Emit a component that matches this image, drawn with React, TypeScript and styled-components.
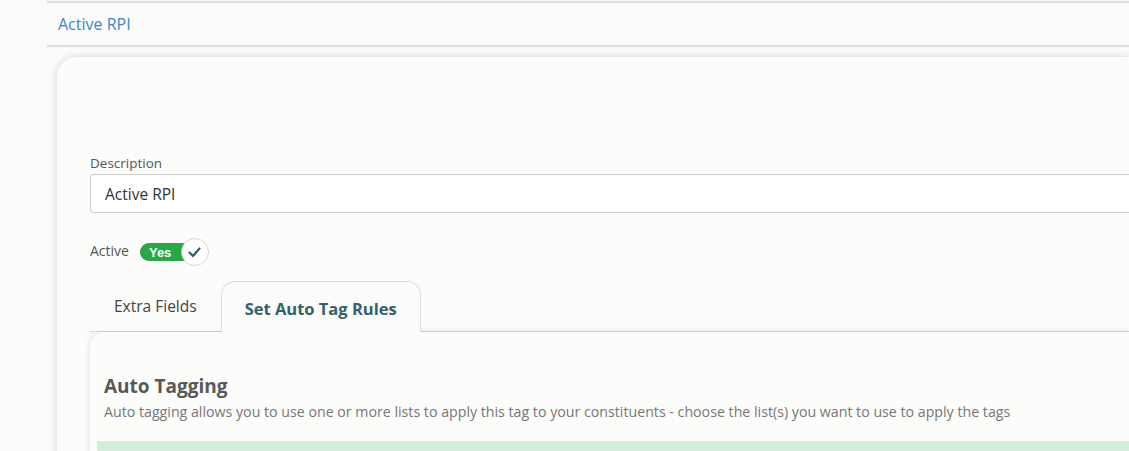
import React from 'react';
import styled, { createGlobalStyle } from 'styled-components';

const GlobalStyle = createGlobalStyle`
  html, body {
    margin: 0;
    padding: 0;
    background: #fbfbf9;
    font-family: 'Open Sans', 'Liberation Sans', sans-serif;
    overflow: hidden;
  }
`;

const Page = styled.div`
  padding-left: 47px;
  padding-top: 1px;
  width: 1129px;
  height: 451px;
  box-sizing: border-box;
  overflow: hidden;
`;

const HeaderBar = styled.div`
  border-top: 2px solid #dedede;
  border-bottom: 2px solid #dedede;
  height: 42px;
  display: flex;
  align-items: center;
  padding-left: 11px;
`;

const HeaderTitle = styled.span`
  color: #3a87c6;
  font-size: 16px;
`;

const Card = styled.div`
  margin: 10px 0 0 10px;
  background: #fcfcfa;
  border-radius: 20px 0 0 0;
  box-shadow: 0 0 8px rgba(0, 0, 0, 0.16);
  padding: 96px 0 0 33px;
  height: 400px;
`;

const Label = styled.label<{ $size?: number }>`
  display: block;
  font-size: ${(p) => p.$size ?? 13.5}px;
  color: #555;
  line-height: 21px;
`;

const TextInput = styled.div`
  height: 39px;
  box-sizing: border-box;
  border: 1px solid #ccc;
  border-right: none;
  border-radius: 4px 0 0 4px;
  background: #fff;
  display: flex;
  align-items: center;
  padding-left: 14px;
  font-size: 15.5px;
  color: #333;
`;

const ActiveRow = styled.div`
  display: flex;
  align-items: center;
  gap: 11px;
  margin-top: 21px;
`;

const Toggle = styled.div`
  position: relative;
  width: 68px;
  height: 28px;
  display: flex;
  align-items: center;
  margin-top: 4px;
`;

const Pill = styled.div`
  width: 54px;
  height: 18px;
  border-radius: 9px;
  background: #28a745;
  color: #fff;
  font-family: 'Liberation Sans', Arial, sans-serif;
  font-weight: 700;
  font-size: 13px;
  display: flex;
  align-items: center;
  padding-left: 9px;
  box-sizing: border-box;
`;

const Knob = styled.div`
  position: absolute;
  left: 41px;
  top: 0;
  width: 26px;
  height: 26px;
  border-radius: 50%;
  background: #fff;
  border: 1px solid #d6d6d6;
  display: flex;
  align-items: center;
  justify-content: center;
`;

const Tabs = styled.div`
  display: flex;
  align-items: flex-end;
  margin-top: 15px;
  border-bottom: 1px solid #d8d8d8;
  height: 50px;
`;

const Tab = styled.div<{ $active?: boolean }>`
  height: ${(p) => (p.$active ? '51px' : '46px')};
  box-sizing: border-box;
  padding: 0 23px;
  padding-top: ${(p) => (p.$active ? '3px' : '0')};
  padding-bottom: ${(p) => (p.$active ? '0' : '6px')};
  display: flex;
  align-items: center;
  font-size: ${(p) => (p.$active ? '16.5px' : '15.5px')};
  color: ${(p) => (p.$active ? '#35606b' : '#444')};
  font-weight: ${(p) => (p.$active ? 700 : 400)};
  border: 1px solid ${(p) => (p.$active ? '#dcdcdc' : 'transparent')};
  border-bottom: none;
  border-radius: 14px 14px 0 0;
  margin-bottom: ${(p) => (p.$active ? '-1px' : '0')};
  background: #fbfbf9;
`;

const Panel = styled.div`
  background: #fcfcfa;
  border-radius: 15px 0 0 0;
  box-shadow: 0 0 6px rgba(0, 0, 0, 0.14);
  padding: 41px 0 0 14px;
  height: 200px;
`;

const PanelTitle = styled.h2`
  margin: 0;
  font-size: 19px;
  font-weight: 700;
  color: #585858;
  line-height: 26px;
`;

const PanelText = styled.p`
  margin: 3px 0 0;
  font-size: 14.2px;
  color: #777;
  line-height: 20px;
`;

const InfoBox = styled.div`
  margin: 19px 0 0 -7px;
  height: 40px;
  background: #d4edda;
`;

export default function App() {
  return (
    <>
      <GlobalStyle />
      <Page>
        <HeaderBar>
          <HeaderTitle>Active RPI</HeaderTitle>
        </HeaderBar>
        <Card>
          <Label>Description</Label>
          <TextInput>Active RPI</TextInput>
          <ActiveRow>
            <Label $size={14}>Active</Label>
            <Toggle>
              <Pill>Yes</Pill>
              <Knob>
                <svg width="13" height="11" viewBox="0 0 13 11">
                  <path d="M1.5 5.5 L5 9 L11.5 1.5" fill="none" stroke="#2f5d6b" strokeWidth="2.2" strokeLinecap="round" strokeLinejoin="round" />
                </svg>
              </Knob>
            </Toggle>
          </ActiveRow>
          <Tabs>
            <Tab>Extra Fields</Tab>
            <Tab $active>Set Auto Tag Rules</Tab>
          </Tabs>
          <Panel>
            <PanelTitle>Auto Tagging</PanelTitle>
            <PanelText>
              Auto tagging allows you to use one or more lists to apply this tag to your constituents - choose the list(s) you want to use to apply the tags
            </PanelText>
            <InfoBox />
          </Panel>
        </Card>
      </Page>
    </>
  );
}
